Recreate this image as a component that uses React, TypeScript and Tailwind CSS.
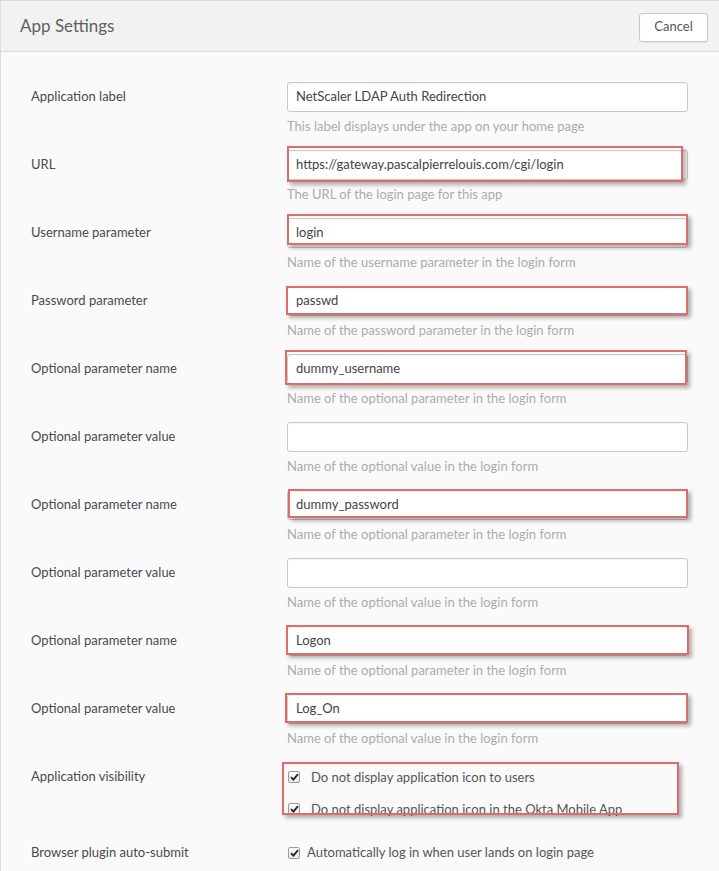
import React from "react";

type Row = {
  label: string;
  value?: string;
  help: string;
  mark?: string;
};

// red highlight boxes drawn over the screenshot, one per marked row
const rows: Row[] = [
  {
    label: "Application label",
    value: "NetScaler LDAP Auth Redirection",
    help: "This label displays under the app on your home page",
  },
  {
    label: "URL",
    value: "https://gateway.pascalpierrelouis.com/cgi/login",
    help: "The URL of the login page for this app",
    mark: "left-0 -top-[4px] w-[396px] h-[36px]",
  },
  {
    label: "Username parameter",
    value: "login",
    help: "Name of the username parameter in the login form",
    mark: "left-0 -top-[4px] w-[401px] h-[31px]",
  },
  {
    label: "Password parameter",
    value: "passwd",
    help: "Name of the password parameter in the login form",
    mark: "-left-[1px] top-0 w-[402px] h-[29px]",
  },
  {
    label: "Optional parameter name",
    value: "dummy_username",
    help: "Name of the optional parameter in the login form",
    mark: "-left-[2px] -top-[4px] w-[402px] h-[35px]",
  },
  {
    label: "Optional parameter value",
    value: "",
    help: "Name of the optional value in the login form",
  },
  {
    label: "Optional parameter name",
    value: "dummy_password",
    help: "Name of the optional parameter in the login form",
    mark: "left-[1px] -top-[1px] w-[400px] h-[29px]",
  },
  {
    label: "Optional parameter value",
    value: "",
    help: "Name of the optional value in the login form",
  },
  {
    label: "Optional parameter name",
    value: "Logon",
    help: "Name of the optional parameter in the login form",
    mark: "-left-[1px] -top-[1px] w-[403px] h-[30px]",
  },
  {
    label: "Optional parameter value",
    value: "Log_On",
    help: "Name of the optional value in the login form",
    mark: "-left-[2px] -top-[1px] w-[403px] h-[30px]",
  },
];

const Check = () => (
  <span className="w-[12px] h-[12px] shrink-0 border border-[#9a9a9a] rounded-[2px] bg-gradient-to-b from-white to-[#e8e8e8] flex items-center justify-center">
    <svg width="9" height="8" viewBox="0 0 9 8">
      <path d="M1 4.2 L3.4 6.6 L8 1.2" fill="none" stroke="#222" strokeWidth="1.8" />
    </svg>
  </span>
);

const App = () => {
  return (
    <div
      className="w-[719px] h-[871px] overflow-hidden bg-[#fafafa] border-l border-t border-[#dcdcdc] text-[13px]"
      style={{ fontFamily: "Lato, 'Open Sans', sans-serif" }}
    >
      <div className="h-[51px] bg-[#f2f2f2] border-b border-[#dcdcdc] flex items-center justify-between pl-[19px] pr-[11px]">
        <div className="text-[17px] text-[#5f5f5f]">App Settings</div>
        <button className="w-[69px] h-[29px] mt-[2px] bg-white border border-[#c9c9c9] rounded-[3px] text-[13px] text-[#555] shadow-[0_1px_1px_rgba(0,0,0,0.06)]">
          Cancel
        </button>
      </div>

      <div className="pl-[30px] pt-[30px]">
        {rows.map((r, i) => (
          <div key={i} className="flex h-[68px]">
            <div className="w-[256px] h-[30px] flex items-center text-[#4a4a4a]">
              {r.label}
            </div>
            <div className="w-[401px]">
              <div className="relative">
                <div className="h-[30px] bg-white border border-[#c8c8c8] rounded-[3px] flex items-center pl-[8px] text-[#444] shadow-[inset_0_1px_1px_rgba(0,0,0,0.04)]">
                  {r.value}
                </div>
                {r.mark && (
                  <span
                    className={`absolute ${r.mark} border-2 border-[#e06b6b] shadow-[3px_3px_4px_rgba(0,0,0,0.3)] pointer-events-none`}
                  />
                )}
              </div>
              <div className="mt-[5px] text-[#acacac] leading-[18px]">{r.help}</div>
            </div>
          </div>
        ))}

        <div className="flex h-[81px]">
          <div className="w-[256px] pt-[5px] text-[#4a4a4a]">Application visibility</div>
          <div className="relative w-[401px]">
            <div className="flex flex-col gap-[12px] pt-[5px] pl-[1px] text-[#555] leading-[20px]">
              <div className="flex items-center gap-[11px]">
                <Check />
                <span>Do not display application icon to users</span>
              </div>
              <div className="flex items-center gap-[11px]">
                <Check />
                <span>Do not display application icon in the Okta Mobile App</span>
              </div>
            </div>
            <span className="absolute -left-[5px] top-0 w-[397px] h-[53px] border-2 border-[#e06b6b] shadow-[3px_3px_4px_rgba(0,0,0,0.3)] pointer-events-none" />
          </div>
        </div>

        <div className="flex">
          <div className="w-[256px] text-[#4a4a4a]">Browser plugin auto-submit</div>
          <div className="flex items-center gap-[7px] pl-[1px] text-[#555]">
            <Check />
            <span>Automatically log in when user lands on login page</span>
          </div>
        </div>
      </div>
    </div>
  );
};

export default App;
